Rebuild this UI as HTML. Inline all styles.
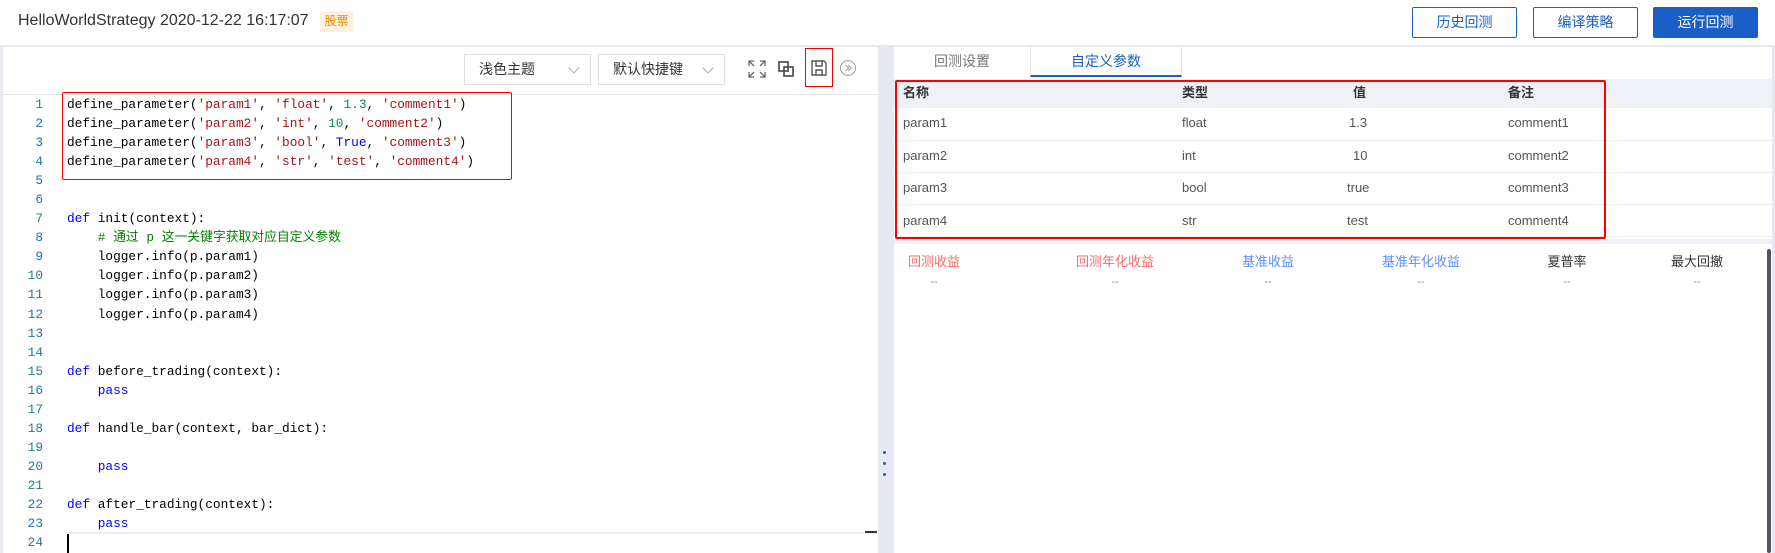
<!DOCTYPE html>
<html><head><meta charset="utf-8"><style>
*{margin:0;padding:0;box-sizing:border-box}
body{width:1775px;height:553px;overflow:hidden;background:#e6e9ef;font-family:"Liberation Sans","Noto Sans CJK SC",sans-serif;position:relative}
.abs{position:absolute}
.hdr{left:0;top:0;width:1775px;height:45px;background:#fff}
.btn{top:7px;height:31px;width:105px;border:1px solid #1a5fc7;color:#1a5fc7;font-size:14px;line-height:29px;text-align:center;border-radius:2px;background:#fff}
.left{left:3px;top:47px;width:875px;height:506px;background:#fff}
.right{left:894px;top:47px;width:878px;height:506px;background:#fff}
.sel{top:7px;height:31px;width:127px;border:1px solid #dcdfe6;font-size:14px;color:#333;line-height:29px;padding-left:14px}
.sel:after{content:"";position:absolute;right:12px;top:9px;width:7px;height:7px;border-right:1px solid #aaa;border-bottom:1px solid #aaa;transform:rotate(45deg)}
.code{font-family:"Liberation Mono",monospace;font-size:12.8px;line-height:19.05px;white-space:pre;color:#000}
.ln{color:#237893;text-align:right;width:40px;left:0}
.s{color:#a31515}.n{color:#098658}.k{color:#0000ff}.c{color:#008000;font-family:"Liberation Mono","Noto Sans CJK SC",monospace}
.th{font-size:13px;font-weight:bold;color:#333}
.td{font-size:13px;color:#555}
.row{left:0;width:878px;height:1px;background:#ebeef5}
.st{font-size:13px;text-align:center;width:140px}
.dash{font-size:11px;color:#888;text-align:center;width:140px}
</style></head><body>
<div class="abs hdr">
<div class="abs" style="left:18px;top:12px;font-size:16px;color:#333">HelloWorldStrategy 2020-12-22 16:17:07</div>
<div class="abs" style="left:320px;top:11px;width:33px;height:21px;background:#fdf1e1;color:#f08c00;font-size:12px;line-height:21px;text-align:center">股票</div>
<div class="abs btn" style="left:1412px">历史回测</div>
<div class="abs btn" style="left:1533px">编译策略</div>
<div class="abs btn" style="left:1653px;background:#1a5fc7;color:#fff">运行回测</div>
</div>
<div class="abs left">
<div class="abs sel" style="left:461px">浅色主题</div>
<div class="abs sel" style="left:595px">默认快捷键</div>
<svg class="abs" style="left:744px;top:12px" width="20" height="20" viewBox="0 0 20 20" fill="none" stroke="#666" stroke-width="1.3"><path d="M2 7V2h5M13 2h5v5M18 13v5h-5M7 18H2v-5M2 2l5 5M18 2l-5 5M18 18l-5-5M2 18l5-5"/></svg>
<svg class="abs" style="left:773px;top:12px" width="20" height="20" viewBox="0 0 20 20" fill="none" stroke="#444" stroke-width="1.6"><rect x="3" y="3" width="9" height="9"/><rect x="8" y="8" width="9" height="9"/></svg>
<div class="abs" style="left:802px;top:1px;width:28px;height:39px;border:1px solid #e00"></div>
<svg class="abs" style="left:806px;top:11px" width="20" height="20" viewBox="0 0 20 20" fill="none" stroke="#555" stroke-width="1.4"><path d="M3 3h12l2 2v12H3z"/><path d="M7 3v5h6V3M7 17v-5h6v5"/></svg>
<svg class="abs" style="left:836px;top:12px" width="18" height="18" viewBox="0 0 18 18" fill="none" stroke="#999" stroke-width="1"><circle cx="9" cy="9" r="7.5"/><path d="M6.5 6l3 3-3 3M9 6l3 3-3 3"/></svg>
<div class="abs" style="left:0;top:47px;width:875px;height:1px;background:#e5e5e5"></div>
<div class="abs" style="left:59px;top:45px;width:450px;height:88px;border:1px solid #e00;border-radius:2px"></div>
<div class="abs code ln" style="top:48px">1
2
3
4
5
6
7
8
9
10
11
12
13
14
15
16
17
18
19
20
21
22
23
24</div>
<div class="abs code" style="left:64px;top:48px">define_parameter(<span class="s">'param1'</span>, <span class="s">'float'</span>, <span class="n">1.3</span>, <span class="s">'comment1'</span>)
define_parameter(<span class="s">'param2'</span>, <span class="s">'int'</span>, <span class="n">10</span>, <span class="s">'comment2'</span>)
define_parameter(<span class="s">'param3'</span>, <span class="s">'bool'</span>, <span class="k">True</span>, <span class="s">'comment3'</span>)
define_parameter(<span class="s">'param4'</span>, <span class="s">'str'</span>, <span class="s">'test'</span>, <span class="s">'comment4'</span>)


<span class="k">def</span> init(context):
    <span class="c"># 通过 p 这一关键字获取对应自定义参数</span>
    logger.info(p.param1)
    logger.info(p.param2)
    logger.info(p.param3)
    logger.info(p.param4)


<span class="k">def</span> before_trading(context):
    <span class="k">pass</span>

<span class="k">def</span> handle_bar(context, bar_dict):

    <span class="k">pass</span>

<span class="k">def</span> after_trading(context):
    <span class="k">pass</span>
</div>
<div class="abs" style="left:64px;top:485px;width:810px;height:2px;background:#eee"></div>
<div class="abs" style="left:64px;top:487px;width:1.5px;height:19px;background:#000"></div>
<div class="abs" style="left:862px;top:484px;width:12px;height:2px;background:#333"></div>
</div>
<div class="abs" style="left:883px;top:451px;width:3px;height:3px;border-radius:2px;background:#1a5fc7"></div>
<div class="abs" style="left:883px;top:462px;width:3px;height:3px;border-radius:2px;background:#1a5fc7"></div>
<div class="abs" style="left:883px;top:473px;width:3px;height:3px;border-radius:2px;background:#1a5fc7"></div>
<div class="abs right">
<div class="abs" style="left:0;top:0;width:136px;height:29px;text-align:center;font-size:14px;color:#777;line-height:29px">回测设置</div>
<div class="abs" style="left:136px;top:0;width:152px;height:30px;text-align:center;font-size:14px;color:#1a5fc7;line-height:29px;border-left:1px solid #e5e5e5;border-right:1px solid #e5e5e5;border-bottom:2px solid #1a5fc7">自定义参数</div>
<div class="abs" style="left:0;top:32px;width:878px;height:29px;background:#eef1f6"></div>
<div class="abs th" style="left:9px;top:35px">名称</div>
<div class="abs th" style="left:288px;top:35px">类型</div>
<div class="abs th" style="left:459px;top:35px">值</div>
<div class="abs th" style="left:614px;top:35px">备注</div>
<div class="abs row" style="top:93px"></div><div class="abs row" style="top:125px"></div><div class="abs row" style="top:157px"></div><div class="abs row" style="top:189px"></div>
<div class="abs td" style="left:9px;top:68px">param1</div><div class="abs td" style="left:288px;top:68px">float</div><div class="abs td" style="left:455px;top:68px">1.3</div><div class="abs td" style="left:614px;top:68px">comment1</div>
<div class="abs td" style="left:9px;top:101px">param2</div><div class="abs td" style="left:288px;top:101px">int</div><div class="abs td" style="left:459px;top:101px">10</div><div class="abs td" style="left:614px;top:101px">comment2</div>
<div class="abs td" style="left:9px;top:133px">param3</div><div class="abs td" style="left:288px;top:133px">bool</div><div class="abs td" style="left:453px;top:133px">true</div><div class="abs td" style="left:614px;top:133px">comment3</div>
<div class="abs td" style="left:9px;top:166px">param4</div><div class="abs td" style="left:288px;top:166px">str</div><div class="abs td" style="left:453px;top:166px">test</div><div class="abs td" style="left:614px;top:166px">comment4</div>
<div class="abs" style="left:0;top:192px;width:878px;height:5px;background:#eef1f6"></div>
<div class="abs" style="left:1px;top:33px;width:711px;height:159px;border:2px solid #f00;border-radius:2px"></div>
<div class="abs st" style="left:-30px;top:204px;color:#f56c6c">回测收益</div>
<div class="abs st" style="left:151px;top:204px;color:#f56c6c">回测年化收益</div>
<div class="abs st" style="left:304px;top:204px;color:#5b8ff9">基准收益</div>
<div class="abs st" style="left:457px;top:204px;color:#5b8ff9">基准年化收益</div>
<div class="abs st" style="left:603px;top:204px;color:#333">夏普率</div>
<div class="abs st" style="left:733px;top:204px;color:#333">最大回撤</div>
<div class="abs dash" style="left:-30px;top:229px">--</div><div class="abs dash" style="left:151px;top:229px">--</div><div class="abs dash" style="left:304px;top:229px">--</div><div class="abs dash" style="left:457px;top:229px">--</div><div class="abs dash" style="left:603px;top:229px">--</div><div class="abs dash" style="left:733px;top:229px">--</div>
<div class="abs" style="left:873px;top:202px;width:4px;height:304px;background:#555;border-radius:2px"></div>
</div>
</body></html>
